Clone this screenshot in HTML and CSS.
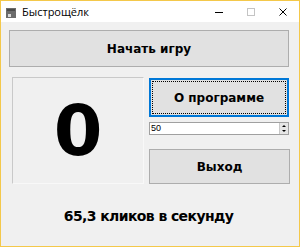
FILE: index.html
```html
<!DOCTYPE html>
<html>
<head>
<meta charset="utf-8">
<link rel="stylesheet" href="styles.css">
</head>
<body>
<div class="window">
  <div class="titlebar">
    <div class="app-icon"><svg width="10" height="10" viewBox="0 0 10 10"><rect x="0" y="0" width="10" height="10" fill="#6b6b6b"/><rect x="1" y="1" width="8" height="2" fill="#4a4a4a"/><rect x="2" y="6" width="3" height="3" fill="#d8d8d8"/></svg></div>
    <div class="title">Быстрощёлк</div>
    <div class="controls">
      <span class="ctl"><svg width="10" height="10" viewBox="0 0 10 10"><line x1="1" y1="5.5" x2="9" y2="5.5" stroke="#000" stroke-width="1"/></svg></span>
      <span class="ctl"><svg width="10" height="10" viewBox="0 0 10 10"><rect x="1.5" y="1.5" width="7" height="7" fill="none" stroke="#c4c4c4" stroke-width="1"/></svg></span>
      <span class="ctl"><svg width="10" height="10" viewBox="0 0 10 10"><path d="M1.5 1.5 L8.5 8.5 M8.5 1.5 L1.5 8.5" stroke="#000" stroke-width="1"/></svg></span>
    </div>
  </div>
  <div class="content">
    <button class="btn start">Начать игру</button>
    <div class="middle">
      <div class="counter">0</div>
      <div class="side">
        <button class="btn about"><span class="focus">О программе</span></button>
        <div class="spin">
          <span class="spin-val">50</span>
          <span class="spin-btns">
            <span class="arr up"></span>
            <span class="arr down"></span>
          </span>
        </div>
        <button class="btn exit">Выход</button>
      </div>
    </div>
    <div class="rate">65,3 кликов в секунду</div>
  </div>
</div>
</body>
</html>
```
FILE: styles.css
```css
html, body {
  margin: 0;
  padding: 0;
  background: #ffffff;
}
.window {
  width: 300px;
  height: 247px;
  box-sizing: border-box;
  border: 1px solid #f4c84a;
  display: flex;
  flex-direction: column;
  background: #f0f0f0;
  font-family: "DejaVu Sans", Verdana, sans-serif;
}
.titlebar {
  height: 21px;
  background: #ffffff;
  display: flex;
  align-items: center;
  flex: none;
}
.app-icon {
  width: 10px;
  height: 10px;
  margin-left: 5px;
  margin-top: 2px;
  display: flex;
}
.title {
  margin-left: 6px;
  font-family: "Open Sans", "Noto Sans", sans-serif;
  font-size: 11px;
  color: #000;
  flex: 1;
}
.controls {
  display: flex;
  height: 100%;
  align-items: center;
}
.ctl {
  width: 32px;
  display: flex;
  justify-content: center;
}
.content {
  flex: 1;
  display: flex;
  flex-direction: column;
  padding: 8px 9px 0 8px;
}
.btn {
  font-family: "DejaVu Sans", Verdana, sans-serif;
  font-weight: bold;
  font-size: 12px;
  color: #000;
  background: #e1e1e1;
  border: 1px solid #adadad;
  padding: 0;
  margin: 0;
  display: flex;
  align-items: center;
  justify-content: center;
  box-sizing: border-box;
}
.start {
  width: 280px;
  height: 37px;
}
.middle {
  display: flex;
  margin-top: 10px;
}
.counter {
  width: 132px;
  height: 107px;
  margin-left: 3px;
  box-sizing: border-box;
  border: 1px solid #c9c9c9;
  border-right-color: #f8f8f8;
  border-bottom-color: #f8f8f8;
  display: flex;
  align-items: center;
  justify-content: center;
  font-size: 70px;
  font-weight: bold;
  color: #000;
  line-height: 1;
}
.side {
  margin-left: 5px;
  margin-top: 1px;
  width: 141px;
  display: flex;
  flex-direction: column;
}
.about {
  width: 140px;
  height: 39px;
  border: 2px solid #0078d7;
  position: relative;
}
.focus {
  position: absolute;
  inset: 1px;
  border: 1px dotted #000;
  display: flex;
  align-items: center;
  justify-content: center;
}
.spin {
  margin-top: 5px;
  width: 140px;
  height: 13px;
  box-sizing: border-box;
  background: #fff;
  border: 1px solid #a0a0a0;
  display: flex;
  align-items: center;
}
.spin-val {
  flex: 1;
  font-family: "Liberation Sans", Arial, sans-serif;
  font-size: 9px;
  padding-left: 1px;
  line-height: 1;
}
.spin-btns {
  width: 8px;
  height: 11px;
  background: #e6e6e6;
  border-left: 1px solid #c8c8c8;
  display: flex;
  flex-direction: column;
  justify-content: space-around;
  align-items: center;
}
.arr {
  width: 0;
  height: 0;
  border-left: 2px solid transparent;
  border-right: 2px solid transparent;
}
.arr.up { border-bottom: 2px solid #000; }
.arr.down { border-top: 2px solid #000; }
.exit {
  margin-top: 14px;
  width: 141px;
  height: 35px;
}
.rate {
  margin-top: 24px;
  text-align: center;
  font-weight: bold;
  font-size: 14px;
  letter-spacing: -0.6px;
  color: #000;
  padding-right: 2px;
}
```
